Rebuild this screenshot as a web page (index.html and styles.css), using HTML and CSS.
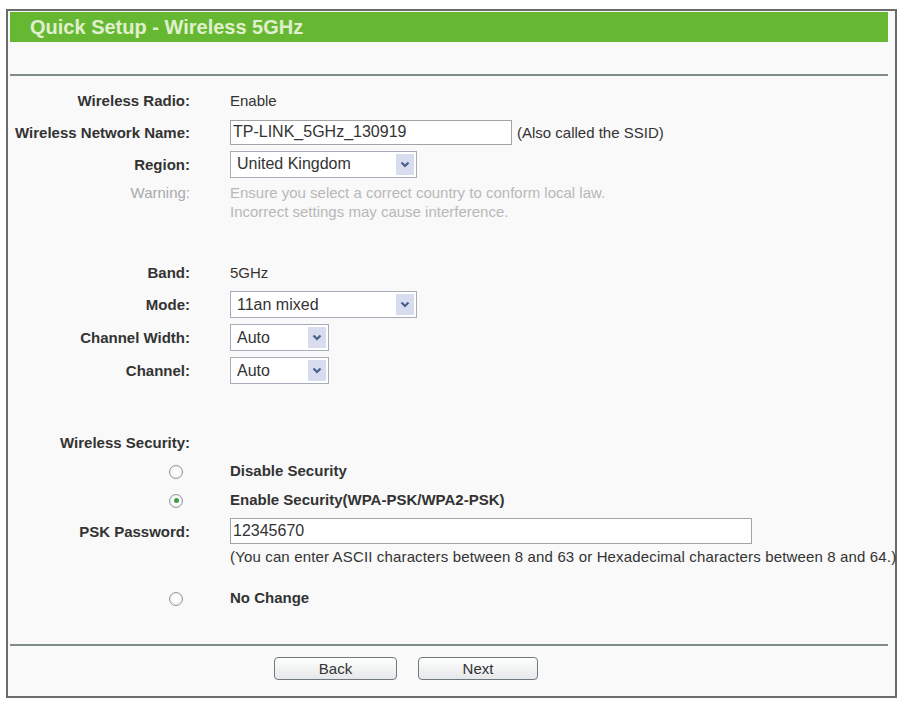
FILE: index.html
```html
<!DOCTYPE html>
<html lang="en">
<head>
    <meta charset="UTF-8">
    <meta name="viewport" content="width=device-width, initial-scale=1.0">
    <title>Quick Setup - Wireless 5GHz</title>
    <link rel="stylesheet" href="styles.css">
</head>
<body>
    <div class="panel">
        <div class="title">Quick Setup - Wireless 5GHz</div>
        <div class="rule top"></div>

        <div class="form">
            <div class="row r-radio">
                <div class="label">Wireless Radio:</div>
                <div class="value">Enable</div>
            </div>
            <div class="row r-name">
                <div class="label">Wireless Network Name:</div>
                <div class="value">
                    <input class="text ssid" type="text" value="TP-LINK_5GHz_130919">
                    <span class="hint">(Also called the SSID)</span>
                </div>
            </div>
            <div class="row r-region">
                <div class="label">Region:</div>
                <div class="value">
                    <div class="select wide"><span>United Kingdom</span><span class="arrow"><svg width="10" height="7" viewBox="0 0 10 7"><path d="M1.5 1.5 L5 5 L8.5 1.5" fill="none" stroke="#4a5f8c" stroke-width="2.2"/></svg></span></div>
                </div>
            </div>
            <div class="row r-warn">
                <div class="label muted">Warning:</div>
                <div class="value warn">Ensure you select a correct country to conform local law.<br>Incorrect settings may cause interference.</div>
            </div>

            <div class="row r-band">
                <div class="label">Band:</div>
                <div class="value">5GHz</div>
            </div>
            <div class="row r-ctl">
                <div class="label">Mode:</div>
                <div class="value">
                    <div class="select wide"><span>11an mixed</span><span class="arrow"><svg width="10" height="7" viewBox="0 0 10 7"><path d="M1.5 1.5 L5 5 L8.5 1.5" fill="none" stroke="#4a5f8c" stroke-width="2.2"/></svg></span></div>
                </div>
            </div>
            <div class="row r-ctl">
                <div class="label">Channel Width:</div>
                <div class="value">
                    <div class="select short"><span>Auto</span><span class="arrow"><svg width="10" height="7" viewBox="0 0 10 7"><path d="M1.5 1.5 L5 5 L8.5 1.5" fill="none" stroke="#4a5f8c" stroke-width="2.2"/></svg></span></div>
                </div>
            </div>
            <div class="row r-ctl">
                <div class="label">Channel:</div>
                <div class="value">
                    <div class="select short"><span>Auto</span><span class="arrow"><svg width="10" height="7" viewBox="0 0 10 7"><path d="M1.5 1.5 L5 5 L8.5 1.5" fill="none" stroke="#4a5f8c" stroke-width="2.2"/></svg></span></div>
                </div>
            </div>

            <div class="row r-sec">
                <div class="label">Wireless Security:</div>
                <div class="value"></div>
            </div>
            <div class="row r-disable">
                <div class="label"><span class="radio"></span></div>
                <div class="value strong">Disable Security</div>
            </div>
            <div class="row r-enable">
                <div class="label"><span class="radio on"></span></div>
                <div class="value strong">Enable Security(WPA-PSK/WPA2-PSK)</div>
            </div>
            <div class="row r-psk">
                <div class="label">PSK Password:</div>
                <div class="value">
                    <input class="text psk" type="text" value="12345670">
                </div>
            </div>
            <div class="row r-note">
                <div class="label"></div>
                <div class="value note">(You can enter ASCII characters between 8 and 63 or Hexadecimal characters between 8 and 64.)</div>
            </div>
            <div class="row r-nochange">
                <div class="label"><span class="radio"></span></div>
                <div class="value strong">No Change</div>
            </div>
        </div>

        <div class="rule bottom"></div>
        <div class="buttons">
            <button class="btn back">Back</button>
            <button class="btn next">Next</button>
        </div>
    </div>
</body>
</html>
```

FILE: styles.css
```css
body {
    margin: 0;
    background: #ffffff;
    color: #333333;
    font-family: 'Liberation Sans', Arial, sans-serif;
    font-size: 15px;
}
.panel {
    box-sizing: border-box;
    width: 891px;
    margin: 9px 0 0 6px;
    padding: 1px 7px 16px 2px;
    border: 2px solid #6b6b6b;
    background: #f9f9f9;
}
.title {
    height: 30px;
    line-height: 30px;
    padding-left: 20px;
    background: #66b832;
    color: #e0f0cf;
    font-size: 20px;
    font-weight: bold;
}
.rule {
    height: 2px;
    background: #7e8e86;
}
.rule.top {
    margin-top: 32px;
}
.rule.bottom {
    margin-top: 32px;
}
.form {
    padding-top: 8px;
}
.row {
    display: grid;
    grid-template-columns: 180px 1fr;
    column-gap: 40px;
    align-items: center;
}
.label {
    text-align: right;
    font-weight: bold;
    color: #333333;
    white-space: nowrap;
}
.label.muted {
    font-weight: normal;
    color: #a9a9a9;
}
.value {
    white-space: nowrap;
    display: flex;
    align-items: center;
}
.value.strong {
    font-weight: bold;
}
.r-radio, .r-name, .r-region { height: 32px; }
.r-warn {
    align-items: start;
    padding-top: 3px;
    height: 38px;
    line-height: 19px;
}
.warn {
    display: block;
    color: #b8b8b8;
}
.r-band { height: 32px; margin-top: 35px; }
.r-ctl { height: 33px; }
.r-sec { height: 28px; margin-top: 41px; }
.r-disable { height: 28px; }
.r-enable { height: 30px; }
.r-psk { height: 34px; }
.r-note { height: 16px; }
.r-nochange { height: 30px; margin-top: 18px; }

.note {
    letter-spacing: 0.15px;
}
.text {
    box-sizing: border-box;
    height: 25px;
    margin: 0;
    padding: 0 2px;
    border: 1px solid #a3a3a3;
    background: #ffffff;
    color: #333333;
    font-family: inherit;
    font-size: 16px;
}
.ssid { width: 282px; }
.psk { width: 522px; height: 26px; }
.hint { margin-left: 5px; }

.select {
    box-sizing: border-box;
    height: 27px;
    display: flex;
    align-items: center;
    justify-content: space-between;
    padding: 2px 2px 2px 6px;
    border: 1px solid #a6adb8;
    background: #ffffff;
    font-size: 16px;
}
.select.wide { width: 187px; }
.select.short { width: 99px; }
.select .arrow {
    width: 18px;
    height: 100%;
    display: flex;
    align-items: center;
    justify-content: center;
    background: #d7dcef;
}

.radio {
    display: inline-block;
    box-sizing: border-box;
    width: 14px;
    height: 14px;
    margin-right: 7px;
    vertical-align: middle;
    border: 1px solid #8e9aa3;
    border-radius: 50%;
    background: radial-gradient(circle, #ffffff 35%, #d8dde2 100%);
    position: relative;
}
.radio.on::after {
    content: "";
    position: absolute;
    left: 3.5px;
    top: 3.5px;
    width: 5px;
    height: 5px;
    border-radius: 50%;
    background: #3d9a45;
}

.buttons {
    display: flex;
    gap: 21px;
    padding: 11px 0 0 264px;
}
.btn {
    height: 23px;
    padding: 0;
    border: 1px solid #6f7a80;
    border-radius: 4px;
    background: linear-gradient(#ffffff, #e5e7e8);
    color: #333333;
    font-family: inherit;
    font-size: 15px;
}
.btn.back { width: 123px; }
.btn.next { width: 120px; }
```
